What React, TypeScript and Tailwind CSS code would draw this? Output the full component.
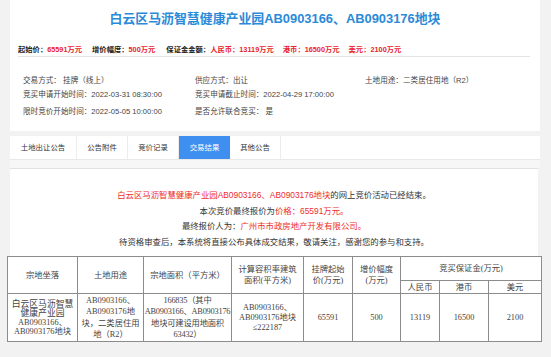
import React from "react";

const cols = [70, 66, 88, 72, 49, 48, 39, 49, 53];

export default function App() {
  return (
    <div className="w-[551px] min-h-[357px] bg-[#f2f2f2] pl-[10px] pr-[11px] font-['Liberation_Sans','Noto_Sans_CJK_SC',sans-serif] text-[#333]">
      {/* top summary card */}
      <div className="h-[131px] bg-white">
        <h1 className="flex h-[38px] items-center justify-center text-[12.9px] font-bold text-[#2b8ad8]">
          白云区马沥智慧健康产业园AB0903166、AB0903176地块
        </h1>
        <div className="ml-[8px] mr-[10px] mt-[5px] flex h-[14px] items-center border-b border-[#e4e4e4] text-[7.3px] font-bold leading-none text-[#222]">
          <span>起始价：</span>
          <span className="text-[#e8232b]">65591万元</span>
          <span className="ml-[10px]">增价幅度：</span>
          <span className="text-[#e8232b]">500万元</span>
          <span className="ml-[11px]">保证金金额：</span>
          <span className="text-[#e8232b]">人民币：13119万元</span>
          <span className="ml-[9px] text-[#e8232b]">港币：16500万元</span>
          <span className="ml-[9px] text-[#e8232b]">美元：2100万元</span>
        </div>
        <div className="ml-[13px] mt-[17px] grid grid-cols-[172px_170px_172px] text-[7.6px] leading-[14px] text-[#444]">
          <div>交易方式： 挂牌（线上）</div>
          <div>供应方式：出让</div>
          <div>土地用途：二类居住用地（R2）</div>
          <div>竞买申请开始时间：2022-03-31 08:30:00</div>
          <div className="col-span-2">竞买申请截止时间：2022-04-29 17:00:00</div>
          <div className="mt-[3px]">限时竞价开始时间：2022-05-05 10:00:00</div>
          <div className="col-span-2 mt-[3px]">是否允许联合竞买： 是</div>
        </div>
      </div>

      {/* tabs */}
      <div className="mt-[5px] flex h-[24px] border-b border-[#e8e8e8] bg-white text-[7.4px] text-[#333]">
        {["土地出让公告", "公告附件", "竞价记录", "交易结果", "其他公告"].map((t, i) => (
          <div
            key={t}
            className={
              (i === 0 ? "w-[67px] " : "w-[51px] ") +
              (i === 3
                ? "bg-[#3f8ff0] text-white "
                : "border-r border-[#ececec] ") +
              "flex items-center justify-center"
            }
          >
            {t}
          </div>
        ))}
      </div>
      <div className="h-[8px] bg-[#f7f7f7]" />

      {/* result panel */}
      <div className="mr-[2px] border-t border-[#e2e2e2] bg-white pt-[18px] text-center text-[8.4px] leading-[16px] text-[#333]">
        <div>
          <span className="text-[#ee2d2d]">白云区马沥智慧健康产业园AB0903166、AB0903176地块</span>
          的网上竞价活动已经结束。
        </div>
        <div>
          本次竞价最终报价为<span className="text-[#ee2d2d]">价格：65591万元。</span>
        </div>
        <div className="leading-[15px]">
          最终报价人为：<span className="text-[#ee2d2d]">广州市市政房地产开发有限公司。</span>
        </div>
        <div>待资格审查后，本系统将直接公布具体成交结果，敬请关注，感谢您的参与和支持。</div>

        <table className="-ml-[3px] mt-[6px] w-[534px] table-fixed border-collapse bg-white font-['Liberation_Serif','Noto_Sans_CJK_SC',serif] text-[8.3px] text-[#444]">
          <colgroup>
            {cols.map((w, i) => (
              <col key={i} style={{ width: w }} />
            ))}
          </colgroup>
          <tbody>
            <tr className="h-[24px] border-t border-[#555]">
              <td rowSpan={2} className="border border-[#8c8c8c] leading-[11px]">宗地坐落</td>
              <td rowSpan={2} className="border border-[#8c8c8c] leading-[11px]">土地用途</td>
              <td rowSpan={2} className="border border-[#8c8c8c] leading-[11px]">宗地面积（平方米）</td>
              <td rowSpan={2} className="border border-[#8c8c8c] leading-[11px]">
                计算容积率建筑
                <br />
                面积(平方米)
              </td>
              <td rowSpan={2} className="border border-[#8c8c8c] leading-[11px]">
                挂牌起始
                <br />
                价(万元)
              </td>
              <td rowSpan={2} className="border border-[#8c8c8c] leading-[11px]">
                增价幅度
                <br />
                (万元)
              </td>
              <td colSpan={3} className="border border-[#8c8c8c] leading-[11px]">竞买保证金(万元)</td>
            </tr>
            <tr className="h-[13px]">
              <td className="border border-[#8c8c8c] leading-[11px]">人民币</td>
              <td className="border border-[#8c8c8c] leading-[11px]">港币</td>
              <td className="border border-[#8c8c8c] leading-[11px]">美元</td>
            </tr>
            <tr className="h-[48px]">
              <td className="border border-[#8c8c8c] leading-[9px]">
                <span className="text-[8.8px]">白云区马沥智慧</span>
                <br />
                <span className="text-[8.8px]">健康产业园</span>
                <br />
                AB0903166、
                <br />
                AB0903176地块
              </td>
              <td className="border border-[#8c8c8c] whitespace-nowrap leading-[11.5px]">
                AB0903166、
                <br />
                AB0903176地
                <br />
                块，二类居住用
                <br />
                地（R2）
              </td>
              <td className="border border-[#8c8c8c] whitespace-nowrap leading-[11.5px] tracking-[-0.2px]">
                166835（其中
                <br />
                AB0903166、AB0903176
                <br />
                地块可建设用地面积
                <br />
                63432）
              </td>
              <td className="border border-[#8c8c8c] whitespace-nowrap leading-[10px]">
                AB0903166、
                <br />
                AB0903176地块
                <br />
                ≤222187
              </td>
              <td className="border border-[#8c8c8c]">65591</td>
              <td className="border border-[#8c8c8c]">500</td>
              <td className="border border-[#8c8c8c]">13119</td>
              <td className="border border-[#8c8c8c]">16500</td>
              <td className="border border-[#8c8c8c]">2100</td>
            </tr>
          </tbody>
        </table>
      </div>
    </div>
  );
}
